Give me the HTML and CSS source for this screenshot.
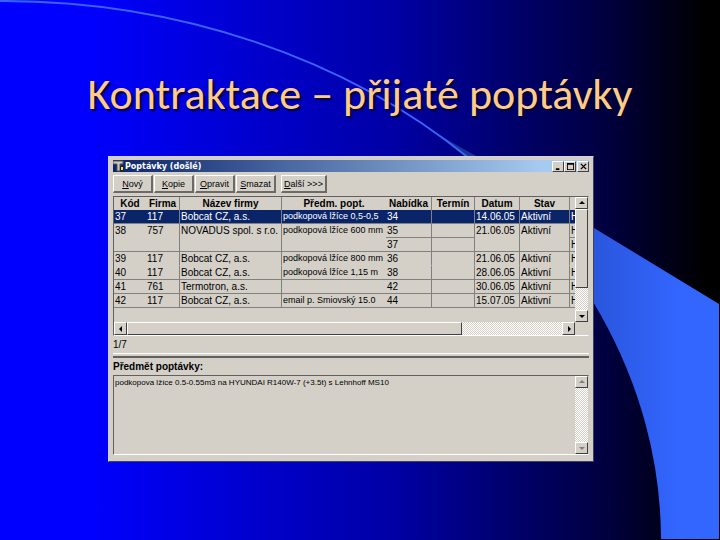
FILE: index.html
```html
<!DOCTYPE html>
<html lang="cs">
<head>
  <meta charset="UTF-8">
  <meta name="viewport" content="width=device-width, initial-scale=1.0">
  <title>Kontraktace – přijaté poptávky</title>
  <link rel="stylesheet" href="styles.css">
</head>
<body>
  <svg class="backdrop" viewBox="0 0 720 540" preserveAspectRatio="none" aria-hidden="true">
    <defs>
      <linearGradient id="beam" gradientUnits="userSpaceOnUse" x1="430" y1="0" x2="680" y2="0">
        <stop offset="0" stop-color="#142c80"/>
        <stop offset="0.65" stop-color="#2a56dc"/>
        <stop offset="1" stop-color="#3366ff"/>
      </linearGradient>
    </defs>
    <path d="M430 130 L476 156 L594 228 L719 304 V539 H661 A661 540 0 0 0 430 130 Z" fill="url(#beam)"/>
    <path d="M0 1 A661 540 0 0 1 470 159" fill="none" stroke="#3a62ff" stroke-width="2"/>
  </svg>

  <h1 class="title">Kontraktace – přijaté poptávky</h1>

  <main class="window">
    <header class="titlebar">
      <svg class="app-icon" viewBox="0 0 12 12" aria-hidden="true">
        <path d="M0 1h10v3H7v7H4V4H0z" fill="#c8c8c0" stroke="#555" stroke-width="1"/>
        <path d="M7 6h4v5H7z" fill="#222"/>
        <path d="M8 7h2v3H8z" fill="#f0e060"/>
      </svg>
      <span class="caption">Poptávky (došlé)</span>
      <button class="win-btn" aria-label="Minimalizovat"><svg viewBox="0 0 8 8"><path d="M1 6h4v2H1z"/></svg></button>
      <button class="win-btn" aria-label="Maximalizovat"><svg viewBox="0 0 8 8"><path d="M0 0h8v8H0zM1 2v5h6V2z" fill-rule="evenodd"/></svg></button>
      <button class="win-btn close" aria-label="Zavřít"><svg viewBox="0 0 8 8"><path d="M1 1l6 6M7 1l-6 6" stroke="#000" stroke-width="1.5"/></svg></button>
    </header>

    <nav class="toolbar">
      <button class="tool"><u>N</u>ový</button>
      <button class="tool"><u>K</u>opie</button>
      <button class="tool"><u>O</u>pravit</button>
      <button class="tool"><u>S</u>mazat</button>
      <button class="tool more"><u>D</u>alší &gt;&gt;&gt;</button>
    </nav>

    <section class="list">
      <div class="list-view">
        <table>
          <colgroup>
            <col class="c-code"><col class="c-firm"><col class="c-name"><col class="c-subject"><col class="c-offer">
            <col class="c-term"><col class="c-date"><col class="c-state"><col class="c-rest">
          </colgroup>
          <thead>
            <tr><th>Kód</th><th>Firma</th><th>Název firmy</th><th>Předm. popt.</th><th>Nabídka</th><th>Termín</th><th>Datum</th><th>Stav</th><th></th></tr>
          </thead>
          <tbody>
            <tr class="selected"><td>37</td><td>117</td><td>Bobcat CZ, a.s.</td><td>podkopová lžíce 0,5-0,5</td><td>34</td><td></td><td>14.06.05</td><td>Aktivní</td><td>H</td></tr>
            <tr><td rowspan="2">38</td><td rowspan="2">757</td><td rowspan="2">NOVADUS spol. s r.o.</td><td rowspan="2">podkopová lžíce 600 mm</td><td>35</td><td></td><td rowspan="2">21.06.05</td><td rowspan="2">Aktivní</td><td>H</td></tr>
            <tr class="sub"><td>37</td><td></td><td>H</td></tr>
            <tr class="open"><td>39</td><td>117</td><td>Bobcat CZ, a.s.</td><td>podkopová lžíce 800 mm</td><td>36</td><td></td><td>21.06.05</td><td>Aktivní</td><td>H</td></tr>
            <tr><td>40</td><td>117</td><td>Bobcat CZ, a.s.</td><td>podkopová lžíce 1,15 m</td><td>38</td><td></td><td>28.06.05</td><td>Aktivní</td><td>H</td></tr>
            <tr><td>41</td><td>761</td><td>Termotron, a.s.</td><td></td><td>42</td><td></td><td>30.06.05</td><td>Aktivní</td><td>H</td></tr>
            <tr><td>42</td><td>117</td><td>Bobcat CZ, a.s.</td><td>email p. Smiovský 15.0</td><td>44</td><td></td><td>15.07.05</td><td>Aktivní</td><td>H</td></tr>
          </tbody>
        </table>
      </div>
      <div class="vbar">
        <button class="arrow" aria-label="Nahoru"><svg viewBox="0 0 6 6"><path d="M0 4h6L3 1z"/></svg></button>
        <div class="thumb v-thumb"></div>
        <button class="arrow last" aria-label="Dolů"><svg viewBox="0 0 6 6"><path d="M0 2h6L3 5z"/></svg></button>
      </div>
      <div class="hbar">
        <button class="arrow" aria-label="Doleva"><svg viewBox="0 0 6 6"><path d="M4 0v6L1 3z"/></svg></button>
        <div class="thumb h-thumb"></div>
        <button class="arrow last" aria-label="Doprava"><svg viewBox="0 0 6 6"><path d="M2 0v6L5 3z"/></svg></button>
      </div>
    </section>

    <p class="status">1/7</p>

    <label class="detail-label" for="subject">Předmět poptávky:</label>
    <div class="detail">
      <textarea id="subject" spellcheck="false">podkopova lžíce 0.5-0.55m3 na HYUNDAI R140W-7 (+3.5t) s Lehnhoff MS10</textarea>
      <div class="vbar disabled">
        <button class="arrow" disabled aria-label="Nahoru"><svg viewBox="0 0 6 6"><path d="M0 4h6L3 1z"/></svg></button>
        <button class="arrow last" disabled aria-label="Dolů"><svg viewBox="0 0 6 6"><path d="M0 2h6L3 5z"/></svg></button>
      </div>
    </div>
  </main>
</body>
</html>
```
FILE: styles.css
```css
* {
  margin: 0;
  padding: 0;
  box-sizing: border-box;
}

body {
  min-height: 100vh;
  padding: 64px 15% 0;
  background: linear-gradient(90deg, #0000ff 0%, #0000ff 12%, #0000a4 55%, #00003c 85%, #000000 98%);
  font-family: "Liberation Sans", Arial, sans-serif;
  font-size: 10px;
  color: #000;
  overflow: hidden;
}

svg {
  display: block;
}

.backdrop {
  position: absolute;
  top: 0;
  left: 0;
  width: 100%;
  height: 100%;
  z-index: -1;
}

.title {
  margin: 0 -108px 32px;
  font-family: Carlito, Lato, sans-serif;
  font-size: 44px;
  font-weight: 400;
  line-height: 60px;
  text-align: center;
  white-space: nowrap;
  color: #ffcc88;
  text-shadow: 2px 2px 2px #000030;
}

.window {
  max-width: 486px;
  padding: 3px 4px 6px;
  background: #d4d0c8;
  border: 1px solid;
  border-color: #d4d0e0 #404060 #404060 #d4d0e0;
}

.titlebar {
  display: flex;
  align-items: center;
  height: 12px;
  background: linear-gradient(90deg, #0a246a, #a6caf0 90%);
}

.app-icon {
  width: 12px;
  height: 12px;
}

.caption {
  flex: 1;
  font-family: "DejaVu Sans", sans-serif;
  font-size: 8px;
  font-weight: bold;
  color: #fff;
}

button {
  background: #d4d0c8;
  border: 1px solid;
  border-color: #fff #404040 #404040 #fff;
  font: inherit;
  color: #000;
}

.win-btn {
  display: grid;
  place-items: center;
  width: 12px;
  height: 11px;
}

.win-btn svg {
  width: 7px;
  height: 7px;
}

.win-btn.close {
  margin-left: 1px;
}

.toolbar {
  display: flex;
  gap: 1px;
  padding: 3px 0;
}

.tool {
  width: 40px;
  height: 18px;
  border-width: 1px 2px 2px 1px;
  border-color: #fff #6c6a66 #6c6a66 #fff;
  font-size: 9px;
  white-space: nowrap;
}

.tool.more {
  width: 46px;
  margin-left: 4px;
}

.list {
  display: grid;
  grid-template-columns: 1fr 13px;
  grid-template-rows: 125px 13px;
  border: 1px solid;
  border-color: #606060 #d4d0c8 #fff #606060;
}

.list-view {
  overflow: hidden;
}

table {
  width: 463px;
  table-layout: fixed;
  border-collapse: separate;
  border-spacing: 0;
}

.c-code { width: 32px; }
.c-firm { width: 34px; }
.c-name { width: 102px; }
.c-subject { width: 104px; }
.c-offer { width: 46px; }
.c-term { width: 43px; }
.c-date { width: 45px; }
.c-state { width: 50px; }

th {
  height: 13px;
  border-right: 1px solid #808080;
  line-height: 12px;
  white-space: nowrap;
}

td {
  height: 14px;
  padding-left: 1px;
  border-right: 1px solid #808080;
  border-bottom: 1px solid #808080;
  line-height: 13px;
  vertical-align: top;
  white-space: nowrap;
  overflow: hidden;
}

th:first-child,
th:nth-child(4),
td:first-child,
td:nth-child(4) {
  border-right: 0;
}

td:nth-child(4) {
  font-size: 9px;
}

.sub td:first-child {
  border-right: 1px solid #808080;
}

.open td {
  border-bottom-color: transparent;
}

.selected td {
  background: #0a246a;
  color: #fff;
}

.vbar,
.hbar {
  display: flex;
  background: repeating-conic-gradient(#fff 0 25%, #d4d0c8 0 50%) 0 0 / 2px 2px;
}

.vbar {
  flex-direction: column;
}

.arrow {
  display: grid;
  place-items: center;
  flex: none;
  width: 13px;
  height: 12px;
}

.arrow svg {
  width: 6px;
  height: 6px;
}

.arrow.last {
  margin-top: auto;
}

.hbar .arrow {
  height: 13px;
}

.hbar .arrow.last {
  margin: 0 0 0 auto;
}

.thumb {
  background: #d4d0c8;
  border: 1px solid;
  border-color: #fff #404040 #404040 #fff;
}

.v-thumb {
  height: 79px;
}

.h-thumb {
  width: 335px;
}

.status {
  height: 18px;
  padding-top: 3px;
  line-height: 12px;
  border-bottom: 1px solid #fff;
}

.detail-label {
  display: block;
  margin-top: 2px;
  padding-top: 1px;
  border-top: 2px solid #606060;
  font-weight: bold;
  line-height: 16px;
}

.detail {
  display: flex;
  height: 80px;
  border: 1px solid;
  border-color: #606060 #d4d0c8 #fff #606060;
}

textarea {
  flex: 1;
  padding: 1px;
  border: 0;
  outline: 0;
  resize: none;
  overflow: hidden;
  background: #d4d0c8;
  font-family: "Liberation Sans", Arial, sans-serif;
  font-size: 8px;
  line-height: 12px;
}

.disabled svg {
  fill: #808080;
}
```
